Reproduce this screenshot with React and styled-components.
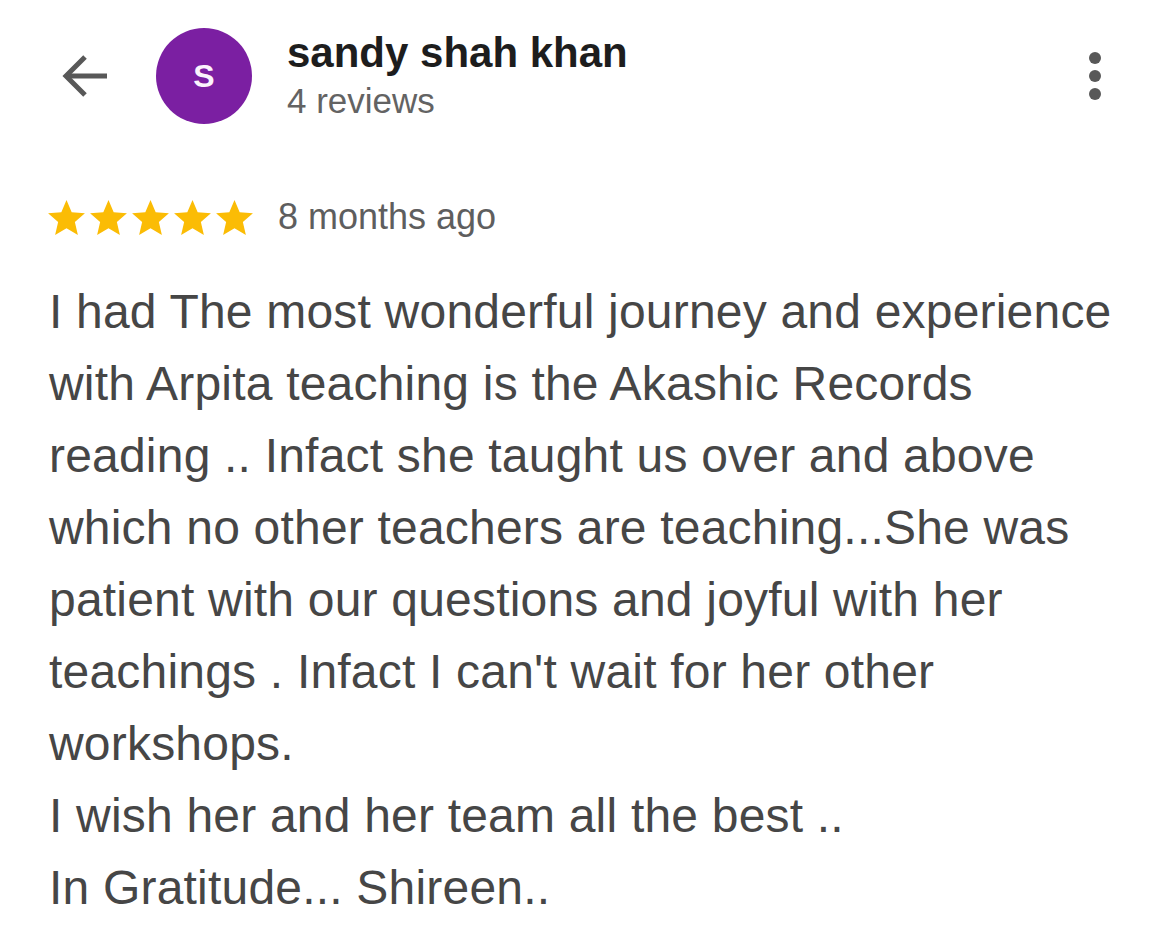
import React from 'react'
import styled, { createGlobalStyle } from 'styled-components'

const GlobalStyle = createGlobalStyle`
  html, body {
    margin: 0;
    padding: 0;
    background: #ffffff;
  }
  body {
    font-family: "Liberation Sans", Arial, Helvetica, sans-serif;
  }
`

const Page = styled.div`
  width: 1175px;
  min-height: 951px;
  background: #fff;
`

const Header = styled.header`
  display: flex;
  align-items: center;
  padding: 28px 74px 0 60px;
  height: 96px;
`

const BackButton = styled.button`
  display: flex;
  align-items: center;
  justify-content: center;
  width: 48px;
  height: 48px;
  padding: 0;
  border: none;
  background: none;
  color: #585858;
  cursor: pointer;
`

const Avatar = styled.div`
  width: 96px;
  height: 96px;
  margin-left: 48px;
  border-radius: 50%;
  background: #7b1fa2;
  color: #fbf3fd;
  display: flex;
  align-items: center;
  justify-content: center;
  font-size: 32px;
  font-weight: 700;
  flex-shrink: 0;
`

const Who = styled.div`
  display: flex;
  flex-direction: column;
  margin-left: 35px;
`

const Name = styled.div`
  font-size: 42px;
  line-height: 48px;
  font-weight: 700;
  color: #1d1d1d;
`

const Count = styled.div`
  margin-top: 2px;
  font-size: 35px;
  line-height: 44px;
  color: #636363;
`

const MoreButton = styled.button`
  margin-left: auto;
  width: 12px;
  height: 48px;
  padding: 0;
  border: none;
  background: none;
  color: #585858;
  display: flex;
  align-items: center;
`

const RatingRow = styled.div`
  display: flex;
  align-items: center;
  height: 40px;
  margin: 73px 0 0 48px;
`

const Stars = styled.div`
  display: flex;
  gap: 5px;
`

const When = styled.span`
  margin-left: 25px;
  font-size: 36px;
  line-height: 40px;
  color: #5e5e5e;
`

const Body = styled.p`
  margin: 39px 0 0;
  padding: 0 45px 0 49px;
  font-size: 48px;
  line-height: 72px;
  letter-spacing: 0.2px;
  color: #464646;
  white-space: pre-line;
`

const Star = () => (
  <svg width="37" height="35" viewBox="2 2 20 19" fill="#fbbc05">
    <path d="M12 17.27L18.18 21l-1.64-7.03L22 9.24l-7.19-.61L12 2 9.19 8.63 2 9.24l5.46 4.73L5.82 21z" />
  </svg>
)

const review = `I had The most wonderful journey and experience with Arpita teaching is the Akashic Records reading .. Infact she taught us over and above which no other teachers are teaching...She was patient with our questions and joyful with her teachings . Infact I can't wait for her other workshops.
I wish her and her team all the best ..
In Gratitude... Shireen..`

export default function App() {
  return (
    <Page>
      <GlobalStyle />
      <Header>
        <BackButton aria-label="Back">
          <svg width="48" height="48" viewBox="0 0 48 48" fill="none" stroke="currentColor" strokeWidth="5">
            <path d="M47 24H6" />
            <path d="M25 5L6 24l19 19" />
          </svg>
        </BackButton>
        <Avatar>S</Avatar>
        <Who>
          <Name>sandy shah khan</Name>
          <Count>4 reviews</Count>
        </Who>
        <MoreButton aria-label="More">
          <svg width="12" height="48" viewBox="0 0 12 48" fill="currentColor">
            <circle cx="6" cy="6" r="6" />
            <circle cx="6" cy="24" r="6" />
            <circle cx="6" cy="42" r="6" />
          </svg>
        </MoreButton>
      </Header>

      <RatingRow>
        <Stars>
          {[0, 1, 2, 3, 4].map((i) => (
            <Star key={i} />
          ))}
        </Stars>
        <When>8 months ago</When>
      </RatingRow>

      <Body>{review}</Body>
    </Page>
  )
}
